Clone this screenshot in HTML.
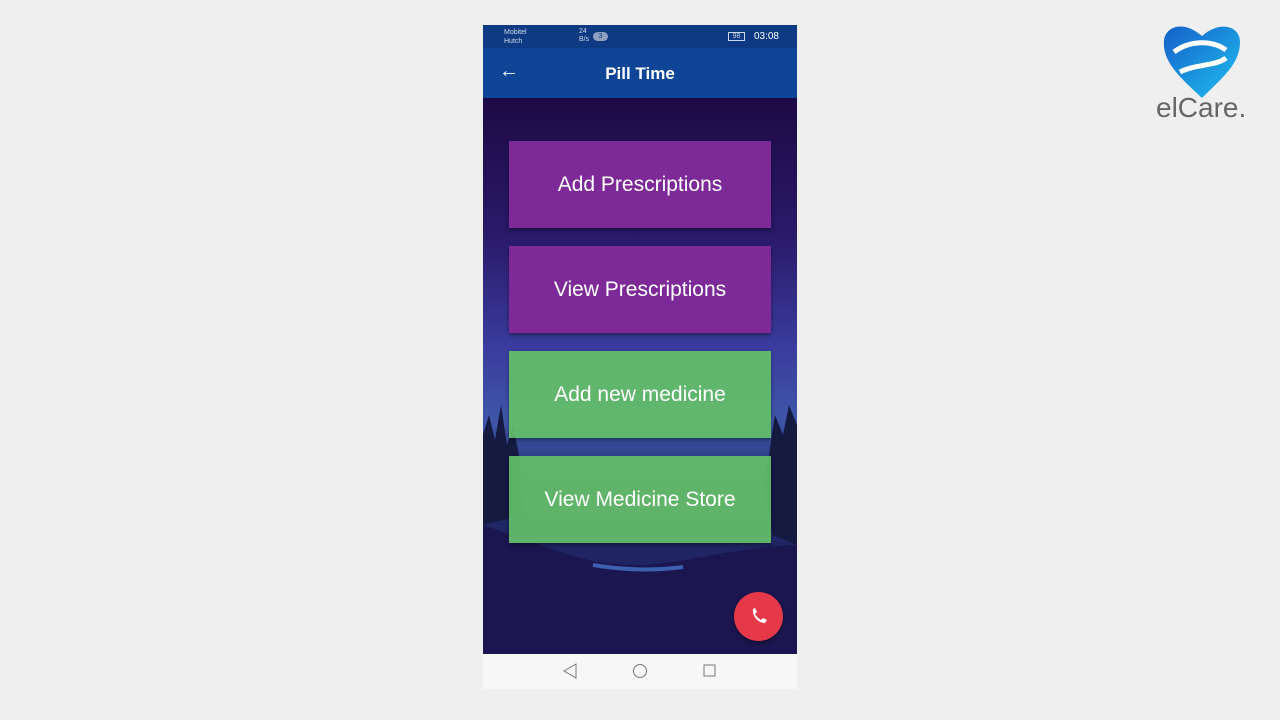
<!DOCTYPE html>
<html><head><style>
*{margin:0;padding:0;box-sizing:border-box}
body{width:1280px;height:720px;background:#efefef;position:relative;overflow:hidden;font-family:"Liberation Sans",sans-serif}
.ph{position:absolute;left:483px;top:25px;width:314px;height:664px}
.sb{position:absolute;left:0;top:0;width:314px;height:23px;background:#0d3a82;color:#cfd8ea;font-size:7px}
.ab{position:absolute;left:0;top:23px;width:314px;height:50px;background:#0e4597;color:#fff}
.bg{position:absolute;left:0;top:73px;width:314px;height:556px;background:linear-gradient(#1d0a45 0%,#2a1a6a 25%,#3a3c9e 45%,#3f56a8 58%,#1e2a66 72%,#221a5c 100%)}
.btn{position:absolute;left:26px;width:262px;height:87px;color:#fff;font-size:21px;display:flex;align-items:center;justify-content:center;box-shadow:0 2px 4px rgba(0,0,0,.4)}
.p{background:#7d2a98}.g{background:rgba(100,190,105,.93)}
.nav{position:absolute;left:0;top:629px;width:314px;height:35px;background:#f6f7f6}
</style></head><body>
<div class="ph">
<div class="sb"><div style="position:absolute;left:21px;top:3px;line-height:9px">Mobitel<br>Hutch</div>
<div style="position:absolute;left:96px;top:3px;line-height:8px">24<br>B/s</div>
<div style="position:absolute;left:110px;top:7px;width:15px;height:9px;border-radius:5px;background:#8fa0c0;color:#0d3a82;text-align:center;line-height:9px">3</div>
<div style="position:absolute;right:18px;top:6px;font-size:10px;color:#fff">03:08</div>
<div style="position:absolute;right:52px;top:7px;width:17px;height:9px;border:1px solid #cfd8ea;font-size:7px;line-height:7px;text-align:center">98</div></div>
<div class="ab"><div style="position:absolute;left:16px;top:12px;font-size:20px">&#8592;</div>
<div style="position:absolute;left:0;width:314px;top:16px;text-align:center;font-size:17px;font-weight:bold">Pill Time</div></div>
<div class="bg"></div>
<svg style="position:absolute;left:0;top:370px" width="314" height="260"><path d="M0 40 L6 20 L12 45 L18 10 L24 50 L30 30 L36 60 L40 120 L0 130Z M314 30 L306 10 L300 40 L292 20 L286 60 L280 90 L290 140 L314 150Z" fill="#141a40"/><path d="M0 130 C60 150 100 170 150 170 C200 170 260 150 314 150 L314 260 L0 260Z" fill="#1c1650"/><path d="M110 170 C140 175 170 176 200 172" stroke="#3d5fb0" stroke-width="4" fill="none"/></svg>
<div class="btn p" style="top:116px">Add Prescriptions</div>
<div class="btn p" style="top:221px">View Prescriptions</div>
<div class="btn g" style="top:326px">Add new medicine</div>
<div class="btn g" style="top:431px">View Medicine Store</div>
<div style="position:absolute;left:251px;top:567px;width:49px;height:49px;border-radius:50%;background:#e53949;box-shadow:0 2px 4px rgba(0,0,0,.4)"><svg width="49" height="49"><path d="M19 17 C18 24 24 31 31 31 L33 28 L29 26 L27 28 C25 27 22 24 21 22 L23 20 L21 16Z" fill="#fff"/></svg></div>
<div class="nav"><svg width="314" height="35"><path d="M93 10 L81 17 L93 24Z" fill="none" stroke="#777"/><circle cx="157" cy="17" r="6.5" fill="none" stroke="#777"/><rect x="221" y="11" width="11" height="11" fill="none" stroke="#777"/></svg></div>
</div>
<svg style="position:absolute;left:1160px;top:22px" width="84" height="78"><defs><linearGradient id="h" x1="0" y1="0" x2="1" y2="1"><stop offset="0" stop-color="#1560c8"/><stop offset="1" stop-color="#20c0f0"/></linearGradient></defs><path d="M42 76 C20 55 2 40 4 18 C6 4 24 -2 42 14 C60 -2 80 4 80 20 C80 42 62 56 42 76Z" fill="url(#h)"/><path d="M14 30 C30 18 52 18 66 28 M20 50 C36 42 56 44 66 36" stroke="#fff" stroke-width="5" fill="none"/></svg>
<div style="position:absolute;left:1156px;top:92px;font-size:28px;color:#666">elCare.</div>
</body></html>
